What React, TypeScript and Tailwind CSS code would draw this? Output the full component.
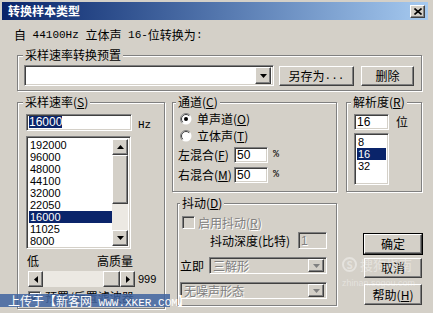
import React from "react";

// classic win2k bevels
const sunken =
  "border border-t-[#808080] border-l-[#808080] border-b-white border-r-white shadow-[inset_1px_1px_0_#404040,inset_-1px_-1px_0_#d4d0c8]";
const raised =
  "border border-t-white border-l-white border-b-[#404040] border-r-[#404040] shadow-[inset_-1px_-1px_0_#808080]";
const groupBox = "border border-[#808080] shadow-[inset_1px_1px_0_#fff,1px_1px_0_#fff]";
const dim = "text-[#808080] [text-shadow:1px_1px_0_#fff]";

const Acc = ({ k }: { k: string }) => (
  <span>
    (<span className="underline underline-offset-[1px]">{k}</span>)
  </span>
);

const Mono = ({ children }: { children: React.ReactNode }) => (
  <span className="font-['Liberation_Mono',monospace] text-[11px]">{children}</span>
);

const Tri = ({ dir, color = "#000" }: { dir: "up" | "down" | "left" | "right"; color?: string }) => {
  if (dir === "up")
    return (
      <svg width="7" height="4" viewBox="0 0 7 4">
        <polygon points="0,4 7,4 3.5,0" fill={color} />
      </svg>
    );
  if (dir === "down")
    return (
      <svg width="7" height="4" viewBox="0 0 7 4">
        <polygon points="0,0 7,0 3.5,4" fill={color} />
      </svg>
    );
  if (dir === "left")
    return (
      <svg width="4" height="7" viewBox="0 0 4 7">
        <polygon points="4,0 4,7 0,3.5" fill={color} />
      </svg>
    );
  return (
    <svg width="4" height="7" viewBox="0 0 4 7">
      <polygon points="0,0 0,7 4,3.5" fill={color} />
    </svg>
  );
};

const ArrowBtn = ({ dir, className = "", color }: { dir: "up" | "down" | "left" | "right"; className?: string; color?: string }) => (
  <div className={`flex shrink-0 items-center justify-center bg-[#d4d0c8] ${raised} ${className}`}>
    <Tri dir={dir} color={color} />
  </div>
);

const Combo = ({ className, btn, text, disabled }: { className: string; btn: string; text?: string; disabled?: boolean }) => (
  <div className={`flex items-center px-[2px] ${disabled ? "bg-[#d4d0c8]" : "bg-white"} ${sunken} ${className}`}>
    <span className={`flex-1 whitespace-nowrap pl-[1px] ${disabled ? dim : ""}`}>{text}</span>
    <ArrowBtn dir="down" className={`w-[16px] ${btn}`} color={disabled ? "#808080" : "#000"} />
  </div>
);

const Button = ({ children, className = "" }: { children: React.ReactNode; className?: string }) => (
  <div className={`flex items-center justify-center bg-[#d4d0c8] ${raised} ${className}`}>{children}</div>
);

const Check = ({ checked, disabled }: { checked?: boolean; disabled?: boolean }) => (
  <div className={`flex h-[13px] w-[13px] shrink-0 items-center justify-center ${disabled ? "bg-[#d4d0c8]" : "bg-white"} ${sunken}`}>
    {checked && (
      <svg width="9" height="9" viewBox="0 0 9 9">
        <polyline points="1.5,4 3.5,6.5 7.5,1.5" fill="none" stroke="#000" strokeWidth="1.8" />
      </svg>
    )}
  </div>
);

const Radio = ({ checked }: { checked?: boolean }) => (
  <svg width="12" height="12" viewBox="0 0 12 12" className="shrink-0">
    <circle cx="6" cy="6" r="5.5" fill="#fff" />
    <path d="M2.1 9.9A5.5 5.5 0 0 1 9.9 2.1" fill="none" stroke="#808080" />
    <path d="M2.8 9.2A4.5 4.5 0 0 1 9.2 2.8" fill="none" stroke="#404040" />
    {checked && <circle cx="6" cy="6" r="2" fill="#000" />}
  </svg>
);

const rates = ["192000", "96000", "48000", "44100", "32000", "22050", "16000", "11025", "8000"];

export default function App() {
  return (
    <div className="relative h-[313px] w-[433px] overflow-hidden bg-[#d4d0c8] font-['Noto_Sans_CJK_SC','Noto_Sans',sans-serif] text-[12px] leading-[14px] text-black">
      {/* title bar */}
      <div className="ml-[2px] mt-[2px] flex h-[18px] w-[426px] items-center bg-linear-to-r from-[#0a246a] to-[#a6caf0] pl-[6px] pr-[3px]">
        <span className="font-bold text-white">转换样本类型</span>
        <div className={`ml-auto flex h-[13px] w-[15px] items-center justify-center bg-[#d4d0c8] ${raised}`}>
          <svg width="8" height="7" viewBox="0 0 8 7">
            <path d="M0.5 0.5L7.5 6.5M7.5 0.5L0.5 6.5" stroke="#000" strokeWidth="1.6" />
          </svg>
        </div>
      </div>

      <div className="ml-[14px] mt-[8px] flex h-[14px] items-center whitespace-pre">
        自<Mono> 44100Hz </Mono>立体声<Mono> 16-</Mono>位转换为<Mono>:</Mono>
      </div>

      {/* presets */}
      <fieldset className={`ml-[17px] mt-[6px] w-[405px] ${groupBox}`}>
        <legend className="ml-[5px] bg-[#d4d0c8] px-[2px] leading-[14px]">采样速率转换预置</legend>
        <div className="flex items-center pb-[4px] pl-[6px] pt-[3px]">
          <Combo className="h-[21px] w-[250px]" btn="h-[17px]" />
          <Button className="ml-[5px] h-[20px] w-[75px]">
            另存为<Mono>...</Mono>
          </Button>
          <Button className="ml-[7px] h-[20px] w-[53px]">删除</Button>
        </div>
      </fieldset>

      <div className="ml-[17px] mt-[4px] flex items-start">
        {/* sample rate */}
        <fieldset className={`h-[214px] w-[148px] shrink-0 ${groupBox}`}>
          <legend className="ml-[5px] bg-[#d4d0c8] px-[2px] leading-[14px]">
            采样速率<Acc k="S" />
          </legend>
          <div className="pl-[8px]">
            <div className="mt-[3px] flex items-center">
              <div className={`flex h-[17px] w-[106px] items-center bg-white pl-[2px] ${sunken}`}>
                <span className="bg-[#0a246a] font-['Liberation_Sans',sans-serif] text-[12px] leading-[12px] text-white">16000</span>
              </div>
              <span className="ml-[6px] mt-[6px] font-['Liberation_Mono',monospace] text-[11px]">Hz</span>
            </div>
            <div className={`mt-[4px] flex h-[113px] w-[105px] bg-white p-[2px] ${sunken}`}>
              <div className="flex-1 font-['Liberation_Sans',sans-serif] text-[11px] leading-[12px]">
                {rates.map((r) => (
                  <div key={r} className={`pl-[1px] ${r === "16000" ? "bg-[#0a246a] text-white" : ""}`}>
                    {r}
                  </div>
                ))}
              </div>
              <div className="flex w-[16px] flex-col bg-[#ece9e3]">
                <ArrowBtn dir="up" className="h-[16px] w-[16px]" />
                <div className={`h-[49px] w-[16px] bg-[#d4d0c8] ${raised}`} />
                <div className="flex-1" />
                <ArrowBtn dir="down" className="h-[16px] w-[16px]" />
              </div>
            </div>
            <div className="mt-[5px] flex w-[107px] justify-between pl-[1px]">
              <span>低</span>
              <span>高质量</span>
            </div>
            <div className="ml-[2px] mt-[3px] flex items-center">
              <div className="flex h-[16px] w-[107px] bg-[#ece9e3]">
                <ArrowBtn dir="left" className="h-[16px] w-[15px]" />
                <div className="w-[60px]" />
                <div className={`h-[16px] w-[17px] bg-[#d4d0c8] ${raised}`} />
                <ArrowBtn dir="right" className="h-[16px] w-[15px]" />
              </div>
              <span className="ml-[3px] font-['Liberation_Sans',sans-serif] text-[11px]">999</span>
            </div>
            <div className="ml-[2px] mt-[3px] flex items-center">
              <Check checked />
              <span className="ml-[4px]">预置/后置滤波器</span>
            </div>
          </div>
        </fieldset>

        {/* middle column */}
        <div className="ml-[7px] flex w-[165px] shrink-0 flex-col">
          <fieldset className={`h-[97px] w-[165px] ${groupBox}`}>
            <legend className="ml-[3px] bg-[#d4d0c8] px-[2px] leading-[14px]">
              通道<Acc k="C" />
            </legend>
            <div className="pl-[5px] pt-[2px]">
              <div className="ml-[2px] flex h-[16px] items-center">
                <Radio checked />
                <span className="ml-[5px]">
                  单声道<Acc k="O" />
                </span>
              </div>
              <div className="ml-[2px] flex h-[17px] items-center">
                <Radio />
                <span className="ml-[5px]">
                  立体声<Acc k="T" />
                </span>
              </div>
              <div className="mt-[3px] flex h-[16px] items-center">
                <span className="w-[56px] whitespace-nowrap">
                  左混合<Acc k="F" />
                </span>
                <div className={`flex h-[16px] w-[34px] items-center bg-white pl-[2px] font-['Liberation_Sans',sans-serif] ${sunken}`}>50</div>
                <span className="ml-[5px] font-['Liberation_Mono',monospace] text-[10px]">%</span>
              </div>
              <div className="mt-[4px] flex h-[16px] items-center">
                <span className="w-[56px] whitespace-nowrap">
                  右混合<Acc k="M" />
                </span>
                <div className={`flex h-[16px] w-[34px] items-center bg-white pl-[2px] font-['Liberation_Sans',sans-serif] ${sunken}`}>50</div>
                <span className="ml-[5px] font-['Liberation_Mono',monospace] text-[10px]">%</span>
              </div>
            </div>
          </fieldset>

          <fieldset className={`ml-[5px] mt-[4px] h-[110px] w-[160px] ${groupBox}`}>
            <legend className="ml-[2px] bg-[#d4d0c8] px-[2px] leading-[14px]">
              抖动<Acc k="D" />
            </legend>
            <div className="pl-[2px]">
              <div className="ml-[2px] mt-[6px] flex h-[13px] items-center">
                <Check disabled />
                <span className={`ml-[3px] ${dim}`}>
                  启用抖动<Acc k="R" />
                </span>
              </div>
              <div className="ml-[30px] mt-[3px] flex h-[17px] items-center">
                <span className="w-[88px] whitespace-nowrap">抖动深度(比特)</span>
                <div className={`flex h-[17px] w-[29px] items-center bg-[#d4d0c8] pl-[2px] font-['Liberation_Sans',sans-serif] ${dim} ${sunken}`}>1</div>
              </div>
              <div className="mt-[8px] flex h-[17px] items-center">
                <span className="w-[29px]">立即</span>
                <Combo className="h-[17px] w-[118px]" btn="h-[13px]" text="三解形" disabled />
              </div>
              <div className="mt-[8px] flex h-[17px] items-center">
                <Combo className="h-[17px] w-[147px]" btn="h-[13px]" text="无噪声形态" disabled />
              </div>
            </div>
          </fieldset>
        </div>

        {/* right column */}
        <div className="ml-[9px] flex w-[77px] shrink-0 flex-col">
          <fieldset className={`h-[97px] w-[76px] ${groupBox}`}>
            <legend className="ml-[4px] bg-[#d4d0c8] px-[2px] leading-[14px]">
              解析度<Acc k="R" />
            </legend>
            <div className="pl-[7px]">
              <div className="mt-[5px] flex items-center">
                <div className={`flex h-[16px] w-[35px] items-center bg-white pl-[2px] font-['Liberation_Sans',sans-serif] ${sunken}`}>16</div>
                <span className="ml-[7px]">位</span>
              </div>
              <div className={`mt-[3px] h-[52px] w-[35px] bg-white p-[2px] font-['Liberation_Sans',sans-serif] text-[11px] leading-[12px] ${sunken}`}>
                <div className="pl-[1px]">8</div>
                <div className="bg-[#0a246a] pl-[1px] text-white">16</div>
                <div className="pl-[1px]">32</div>
              </div>
            </div>
          </fieldset>
          <div className="ml-[17px] mt-[41px] h-[22px] w-[60px] border border-black">
            <Button className="h-full w-full">确定</Button>
          </div>
          <Button className="ml-[18px] mt-[3px] h-[20px] w-[58px]">取消</Button>
          <Button className="ml-[18px] mt-[6px] h-[21px] w-[58px]">
            帮助<Acc k="H" />
          </Button>
        </div>
      </div>

      {/* faint sogou watermark */}
      <div className="pointer-events-none absolute left-[342px] top-[257px] flex flex-col text-white/40">
        <div className="flex items-center">
          <div className="flex h-[15px] w-[15px] items-center justify-center rounded-full border-2 border-white/40 text-[10px] font-bold">S</div>
          <span className="ml-[3px] text-[13px]">搜狗指南</span>
        </div>
        <span className="mt-[6px] font-['Liberation_Sans',sans-serif] text-[9px] leading-[10px]">zhinan.sogou.com</span>
      </div>

      {/* upload watermark band */}
      <div className="pointer-events-none absolute left-0 top-[294px] h-[13px] w-[170px] whitespace-nowrap bg-[#3f64a0]/85 pl-[8px] text-[12px] leading-[13px] text-white">
        上传于【新客网<Mono> WWW.XKER.COM</Mono>】
      </div>
    </div>
  );
}
